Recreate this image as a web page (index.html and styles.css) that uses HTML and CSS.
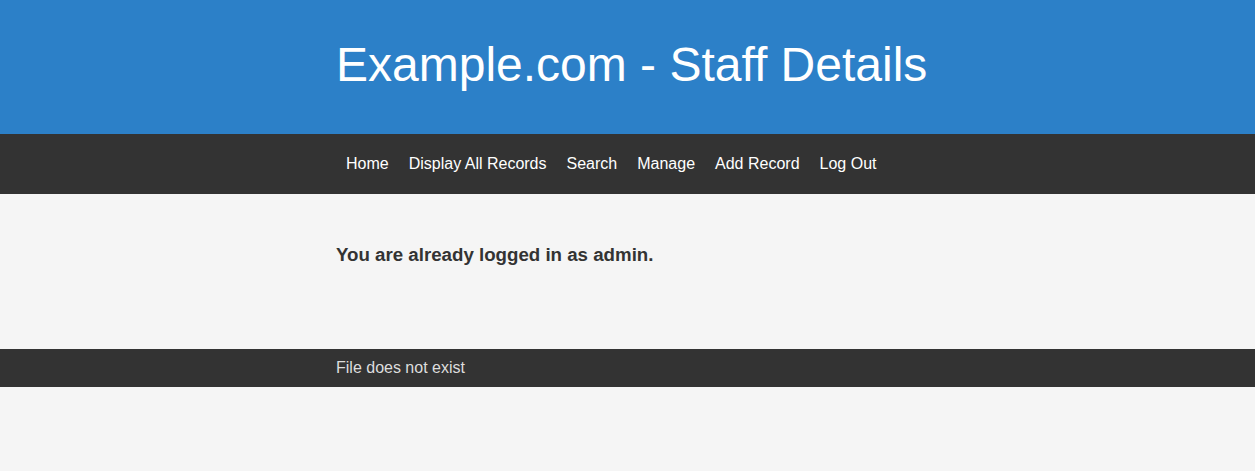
FILE: index.html
```html
<!DOCTYPE html>
<html lang="en">
<head>
    <meta charset="UTF-8">
    <title>Example.com - Staff Details</title>
    <link rel="stylesheet" href="styles.css">
</head>
<body>
    <header class="site-header">
        <div class="container">
            <h1 class="title">Example.com - Staff Details</h1>
        </div>
    </header>
    <nav class="site-nav">
        <div class="container">
            <a href="#">Home</a>
            <a href="#">Display All Records</a>
            <a href="#">Search</a>
            <a href="#">Manage</a>
            <a href="#">Add Record</a>
            <a href="#">Log Out</a>
        </div>
    </nav>
    <main class="content">
        <div class="container">
            <p class="message">You are already logged in as admin.</p>
        </div>
    </main>
    <footer class="site-footer">
        <div class="container">File does not exist</div>
    </footer>
</body>
</html>
```

FILE: styles.css
```css
body {
    font-family: 'Liberation Sans', Arial, sans-serif;
    background-color: #f5f5f5;
    color: #333;
    margin: 0;
    padding: 0;
}
.container {
    width: 583px;
    margin: 0 auto;
}
.site-header {
    background-color: #2c80c8;
    height: 134px;
    display: flex;
    align-items: center;
}
.title {
    margin: 0 0 6px;
    font-size: 48px;
    font-weight: normal;
    color: white;
    white-space: nowrap;
}
.site-nav {
    background-color: #333;
    height: 60px;
}
.site-nav .container {
    display: flex;
    align-items: center;
    height: 100%;
}
.site-nav a {
    color: white;
    text-decoration: none;
    font-size: 16px;
    padding: 0 10px;
    white-space: nowrap;
}
.content {
    height: 155px;
    box-sizing: border-box;
    padding-top: 50px;
}
.message {
    margin: 0;
    font-size: 18.7px;
    font-weight: bold;
    color: #333;
    white-space: nowrap;
}
.site-footer {
    background-color: #333;
    color: #ddd;
    height: 38px;
    line-height: 38px;
    font-size: 16px;
}
```
